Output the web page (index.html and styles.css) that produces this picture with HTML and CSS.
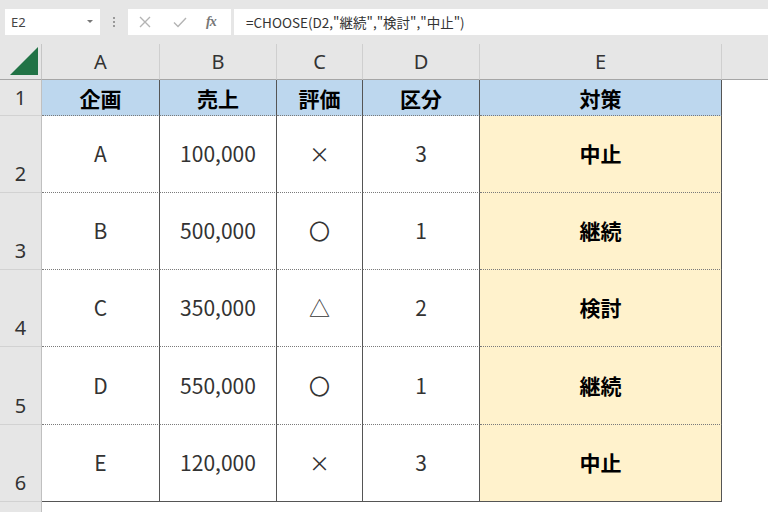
FILE: index.html
```html
<!DOCTYPE html>
<html lang="ja">
<head>
<meta charset="utf-8">
<link rel="stylesheet" href="styles.css">
</head>
<body>
<div class="toolbar">
  <div class="namebox"><span>E2</span><span class="arrow"></span></div>
  <div class="dots"><i></i><i></i><i></i></div>
  <div class="iconbox">
    <svg class="ic" width="14" height="14" viewBox="0 0 14 14"><path d="M2 2 L12 12 M12 2 L2 12" stroke="#b4b4b4" stroke-width="1.4" fill="none"/></svg>
    <svg class="ic" width="16" height="14" viewBox="0 0 16 14"><path d="M2 7.5 L6 11.5 L14 3" stroke="#b4b4b4" stroke-width="1.4" fill="none"/></svg>
    <span class="fx">fx</span>
  </div>
  <div class="formula">=CHOOSE(D2,"継続","検討","中止")</div>
</div>
<div class="sheet">
  <div class="corner"><svg width="30" height="30" viewBox="0 0 30 30"><polygon points="29,1 29,29 1,29" fill="#217346"/></svg></div>
  <div class="ch">A</div><div class="ch">B</div><div class="ch">C</div><div class="ch">D</div><div class="ch">E</div><div class="ch fill"></div>

  <div class="rh first">1</div>
  <div class="c hd">企画</div><div class="c hd">売上</div><div class="c hd">評価</div><div class="c hd">区分</div><div class="c hd">対策</div><div class="blank"></div>

  <div class="rh">2</div>
  <div class="c">A</div><div class="c">100,000</div><div class="c">×</div><div class="c">3</div><div class="c res">中止</div><div class="blank"></div>

  <div class="rh">3</div>
  <div class="c">B</div><div class="c">500,000</div><div class="c">〇</div><div class="c">1</div><div class="c res">継続</div><div class="blank"></div>

  <div class="rh">4</div>
  <div class="c">C</div><div class="c">350,000</div><div class="c">△</div><div class="c">2</div><div class="c res">検討</div><div class="blank"></div>

  <div class="rh">5</div>
  <div class="c">D</div><div class="c">550,000</div><div class="c">〇</div><div class="c">1</div><div class="c res">継続</div><div class="blank"></div>

  <div class="rh">6</div>
  <div class="c last">E</div><div class="c last">120,000</div><div class="c last">×</div><div class="c last">3</div><div class="c res last">中止</div><div class="blank"></div>

  <div class="rh end"></div>
  <div class="tail"></div>
</div>
</body>
</html>
```
FILE: styles.css
```css
* { box-sizing: border-box; }
html, body { margin: 0; padding: 0; }
body {
  width: 768px; height: 512px; overflow: hidden; background: #fff;
  font-family: "Noto Sans CJK JP", "Noto Sans", sans-serif;
  color: #333;
}
.toolbar {
  height: 44px; background: #e6e6e6;
  display: flex; align-items: flex-start; padding-top: 9px;
}
.namebox {
  margin-left: 5px; width: 95px; height: 26px; background: #fff;
  display: flex; align-items: center; justify-content: space-between;
  padding: 0 7px 0 6px; font-size: 13px; color: #444;
  font-family: "Noto Sans", sans-serif;
}
.arrow {
  width: 0; height: 0; border-left: 3px solid transparent; border-right: 3px solid transparent;
  border-top: 3px solid #777; margin-bottom: 2px;
}
.dots {
  width: 28px; height: 26px; display: flex; flex-direction: column;
  align-items: center; justify-content: center; gap: 2px;
}
.dots i { width: 2px; height: 2px; background: #999; display: block; }
.iconbox {
  width: 103px; height: 26px; background: #fff;
  display: flex; align-items: center; padding-left: 10px;
}
.iconbox .ic { display: block; }
.iconbox .ic:nth-child(2) { margin-left: 20px; }
.fx {
  margin-left: 18px; font-family: "Liberation Serif", serif; font-style: italic;
  font-size: 14px; color: #777; font-weight: bold; letter-spacing: -1px;
}
.formula {
  margin-left: 3px; flex: 1; height: 26px; background: #fff;
  font-size: 13.5px; color: #333; padding-left: 12px; line-height: 26px;
  white-space: nowrap;
}
.sheet {
  display: grid;
  grid-template-columns: 42px 118px 117px 86px 117px 242px 1fr;
  grid-template-rows: 36px 36px 77px 77px 77px 78px 77px 10px;
}
.corner {
  background: #e6e6e6; border-right: 1px solid #c6c6c6; border-bottom: 1px solid #a6a6a6;
  display: flex; align-items: flex-end; justify-content: flex-end; padding: 0 2px 3px 0;
}
.ch {
  background: #e6e6e6; border-right: 1px solid #cfcfcf; border-bottom: 1px solid #a6a6a6;
  display: flex; align-items: center; justify-content: center;
  font-size: 20px; color: #333; font-family: "Noto Sans", sans-serif;
}
.ch.fill { border-right: none; }
.rh {
  background: #e6e6e6; border-right: 1px solid #c0c0c0; border-bottom: 1px solid #d2d2d2;
  display: flex; align-items: flex-end; justify-content: center;
  font-size: 20px; color: #333; padding-bottom: 5px; font-family: "Noto Sans", sans-serif;
}
.rh.first { align-items: center; padding-bottom: 0; }
.c {
  border-right: 1px solid #555; border-bottom: 1px dotted #7a7a7a;
  display: flex; align-items: center; justify-content: center;
  font-size: 21px; color: #333; padding-bottom: 2px;
}
.c.hd { background: #bdd7ee; color: #000; font-weight: bold; padding-bottom: 0; padding-top: 1px; }
.c.res { background: #fff2cc; color: #000; font-weight: bold; }
.c.last { border-bottom: 1px solid #555; }
.blank { background: #fff; }
.rh.end { border-bottom: none; }
.tail { grid-column: 2 / 8; background: #fff; }
```
